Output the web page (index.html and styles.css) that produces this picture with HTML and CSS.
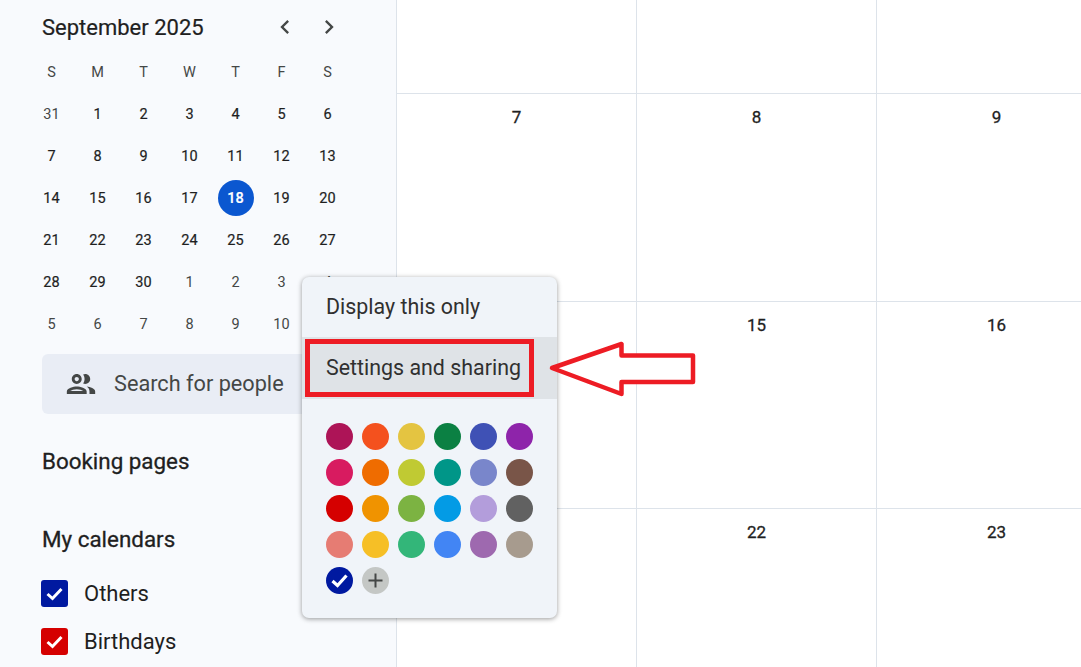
FILE: index.html
```html
<!DOCTYPE html>
<html lang="en">
<head>
  <meta charset="UTF-8" />
  <title>Calendar</title>
  <link rel="stylesheet" href="styles.css">
</head>
<body>
  <aside class="sidebar">
    <div class="mini-head">
      <span class="mini-title">September 2025</span>
      <div class="mini-nav">
        <button class="nav-btn" aria-label="Previous month"><svg viewBox="0 0 24 24" width="28" height="28"><path d="M15.41 7.41L14 6l-6 6 6 6 1.41-1.41L10.83 12z"/></svg></button>
        <button class="nav-btn" aria-label="Next month"><svg viewBox="0 0 24 24" width="28" height="28"><path d="M8.59 16.59L10 18l6-6-6-6-1.41 1.41L13.17 12z"/></svg></button>
      </div>
    </div>

    <div class="mini-grid">
      <span class="dow">S</span><span class="dow">M</span><span class="dow">T</span><span class="dow">W</span><span class="dow">T</span><span class="dow">F</span><span class="dow">S</span>
      <span class="muted">31</span><span>1</span><span>2</span><span>3</span><span>4</span><span>5</span><span>6</span>
      <span>7</span><span>8</span><span>9</span><span>10</span><span>11</span><span>12</span><span>13</span>
      <span>14</span><span>15</span><span>16</span><span>17</span><span><b class="today">18</b></span><span>19</span><span>20</span>
      <span>21</span><span>22</span><span>23</span><span>24</span><span>25</span><span>26</span><span>27</span>
      <span>28</span><span>29</span><span>30</span><span class="muted">1</span><span class="muted">2</span><span class="muted">3</span><span class="muted">4</span>
      <span class="muted">5</span><span class="muted">6</span><span class="muted">7</span><span class="muted">8</span><span class="muted">9</span><span class="muted">10</span><span></span>
    </div>

    <div class="people-search">
      <svg viewBox="0 0 24 24" width="34" height="34"><path d="M9 13.75c-2.34 0-7 1.17-7 3.5V19h14v-1.75c0-2.33-4.66-3.5-7-3.5zM4.34 17c.84-.58 2.87-1.25 4.66-1.25s3.82.67 4.66 1.25H4.34zM9 12c1.93 0 3.5-1.57 3.5-3.5S10.93 5 9 5 5.5 6.57 5.5 8.5 7.07 12 9 12zm0-5c.83 0 1.5.67 1.5 1.5S9.83 10 9 10s-1.5-.67-1.5-1.5S8.17 7 9 7zm7.04 6.81c1.16.84 1.96 1.96 1.96 3.44V19h4v-1.75c0-2.02-3.5-3.17-5.96-3.44zM15 12c1.93 0 3.5-1.57 3.5-3.5S16.93 5 15 5c-.54 0-1.04.13-1.5.35.63.89 1 1.98 1 3.15s-.37 2.26-1 3.15c.46.22.96.35 1.5.35z"/></svg>
      <span>Search for people</span>
    </div>

    <h2 class="side-title booking">Booking pages</h2>
    <h2 class="side-title calendars">My calendars</h2>

    <ul class="cal-list">
      <li><span class="check check-blue"><svg viewBox="0 0 27 27" width="27" height="27"><path d="M6.5 14l5 4.5L20.5 9"/></svg></span>Others</li>
      <li><span class="check check-red"><svg viewBox="0 0 27 27" width="27" height="27"><path d="M6.5 14l5 4.5L20.5 9"/></svg></span>Birthdays</li>
    </ul>
  </aside>

  <main class="month">
    <div class="cell"></div><div class="cell"></div><div class="cell"></div>
    <div class="cell">7</div><div class="cell">8</div><div class="cell">9</div>
    <div class="cell">14</div><div class="cell">15</div><div class="cell">16</div>
    <div class="cell">21</div><div class="cell">22</div><div class="cell">23</div>
  </main>

  <div class="menu">
    <div class="menu-item first">Display this only</div>
    <div class="menu-item active">Settings and sharing<span class="red-box"></span></div>
    <div class="swatches">
      <span class="swatch c1"></span><span class="swatch c2"></span><span class="swatch c3"></span><span class="swatch c4"></span><span class="swatch c5"></span><span class="swatch c6"></span>
      <span class="swatch c7"></span><span class="swatch c8"></span><span class="swatch c9"></span><span class="swatch c10"></span><span class="swatch c11"></span><span class="swatch c12"></span>
      <span class="swatch c13"></span><span class="swatch c14"></span><span class="swatch c15"></span><span class="swatch c16"></span><span class="swatch c17"></span><span class="swatch c18"></span>
      <span class="swatch c19"></span><span class="swatch c20"></span><span class="swatch c21"></span><span class="swatch c22"></span><span class="swatch c23"></span><span class="swatch c24"></span>
      <span class="swatch c25"><svg viewBox="0 0 27 27" width="27" height="27"><path class="tick" d="M6.5 14l5 4.500L20.500 8.500"/></svg></span>
      <span class="swatch add"><svg viewBox="0 0 27 27" width="27" height="27"><path class="plus" d="M13.500 6.500v14M6.500 13.500h14"/></svg></span>
    </div>
  </div>

  <!-- annotation arrow pointing at the menu item -->
  <svg class="arrow" viewBox="0 0 160 70" width="160" height="70">
    <path d="M7 28L76.500 4V15.500H148V42H76.500V54Z"/>
  </svg>
</body>
</html>
```

FILE: styles.css
```css
:root {
  --side-bg: #f8fafd;
  --menu-bg: #f0f4f9;
  --line: #dde3ea;
  --text: #1f1f1f;
  --text-soft: #444746;
  --red: #ed1c24;
}

* {
  box-sizing: border-box;
}

html, body {
  height: 100%;
}

body {
  margin: 0;
  display: flex;
  overflow: hidden;
  font-family: Roboto, sans-serif;
  color: var(--text);
  background: #fff;
}

.sidebar {
  flex: 0 0 397px;
  height: 667px;
  background: var(--side-bg);
  border-right: 1px solid var(--line);
  overflow: hidden;
}

.mini-head {
  display: flex;
  align-items: center;
  height: 51px;
  padding: 3px 45px 0 42px;
}

.mini-title {
  font-size: 22px;
  font-weight: 400;
  -webkit-text-stroke: 0.2px var(--text);
}

.mini-nav {
  display: flex;
  margin-left: auto;
}

.nav-btn {
  display: flex;
  align-items: center;
  justify-content: center;
  width: 44px;
  height: 40px;
  padding: 0;
  border: 0;
  background: none;
}

.nav-btn svg {
  fill: var(--text-soft);
}

.mini-grid {
  display: grid;
  grid-template-columns: repeat(7, 46px);
  grid-auto-rows: 42px;
  margin-left: 28.5px;
  font-size: 14.5px;
  font-weight: 400;
  -webkit-text-stroke: 0.2px currentColor;
}

.mini-grid span {
  display: flex;
  align-items: center;
  justify-content: center;
}

.mini-grid .dow,
.mini-grid .muted {
  color: var(--text-soft);
  -webkit-text-stroke: 0;
}

.today {
  display: flex;
  align-items: center;
  justify-content: center;
  width: 36px;
  height: 36px;
  border-radius: 50%;
  background: #0b57d0;
  color: #fff;
  font-weight: 500;
}

.people-search {
  display: flex;
  align-items: center;
  gap: 16px;
  width: 312px;
  height: 60px;
  margin: 9px 0 0 42px;
  padding: 0 0 1px 22px;
  border-radius: 6px;
  background: #e9edf5;
  color: var(--text-soft);
  font-size: 21.7px;
}

.people-search svg {
  flex: none;
  fill: var(--text-soft);
}

.side-title {
  margin: 0 0 0 42px;
  font-size: 22.4px;
  font-weight: 400;
  -webkit-text-stroke: 0.3px var(--text);
  line-height: 24px;
}

.booking {
  margin-top: 35px;
}

.calendars {
  margin-top: 54px;
}

.cal-list {
  list-style: none;
  margin: 18.5px 0 0;
  padding: 0 0 0 41px;
}

.cal-list li {
  display: flex;
  align-items: center;
  gap: 16px;
  height: 48px;
  font-size: 22px;
}

.check {
  display: block;
  width: 27px;
  height: 27px;
  border-radius: 3px;
}

.check svg,
.swatch svg {
  display: block;
}

.check path,
.tick {
  fill: none;
  stroke: #fff;
  stroke-width: 3;
}

.check-blue {
  background: #0019a0;
}

.check-red {
  background: #d50000;
}

.month {
  flex: 1;
  display: grid;
  grid-template-columns: repeat(3, 240px);
  grid-template-rows: 94px 208px 207px 170px;
  overflow: hidden;
}

.cell {
  padding-top: 13px;
  border-right: 1px solid var(--line);
  border-bottom: 1px solid var(--line);
  text-align: center;
  font-size: 17px;
  font-weight: 400;
  -webkit-text-stroke: 0.3px var(--text);
  line-height: 20px;
}

.menu {
  position: absolute;
  left: 302px;
  top: 277px;
  width: 255px;
  height: 341px;
  border-radius: 7px;
  background: var(--menu-bg);
  box-shadow: 0 1px 5px rgba(0, 0, 0, 0.4);
  color: #303030;
  font-size: 21.4px;
}

.menu-item {
  position: relative;
  display: flex;
  align-items: center;
  height: 60px;
  padding-left: 24px;
}

.menu-item.first {
  padding-bottom: 2px;
}

.menu-item.active {
  height: 62px;
  padding-bottom: 2px;
  background: #dfe3e7;
}

.red-box {
  position: absolute;
  left: 3px;
  top: 2px;
  width: 229px;
  height: 58px;
  border: 5px solid var(--red);
}

.swatches {
  display: grid;
  grid-template-columns: repeat(6, 27px);
  grid-auto-rows: 27px;
  gap: 9px;
  padding: 24px 0 0 24px;
}

.swatch {
  display: block;
  border-radius: 50%;
}

.tick {
  stroke-width: 3.2;
}

.plus {
  fill: none;
  stroke: #444746;
  stroke-width: 2;
}

.add { background: #c4c7c5; }
.c1 { background: #ad1457; }
.c2 { background: #f4511e; }
.c3 { background: #e4c441; }
.c4 { background: #0b8043; }
.c5 { background: #3f51b5; }
.c6 { background: #8e24aa; }
.c7 { background: #d81b60; }
.c8 { background: #ef6c00; }
.c9 { background: #c0ca33; }
.c10 { background: #009688; }
.c11 { background: #7986cb; }
.c12 { background: #795548; }
.c13 { background: #d50000; }
.c14 { background: #f09300; }
.c15 { background: #7cb342; }
.c16 { background: #039be5; }
.c17 { background: #b39ddb; }
.c18 { background: #616161; }
.c19 { background: #e67c73; }
.c20 { background: #f6bf26; }
.c21 { background: #33b679; }
.c22 { background: #4285f4; }
.c23 { background: #9e69af; }
.c24 { background: #a79b8e; }
.c25 { background: #0019a0; }

.arrow {
  position: absolute;
  left: 545px;
  top: 340px;
}

.arrow path {
  fill: #fff;
  stroke: var(--red);
  stroke-width: 4.5;
  stroke-linejoin: round;
}
```
